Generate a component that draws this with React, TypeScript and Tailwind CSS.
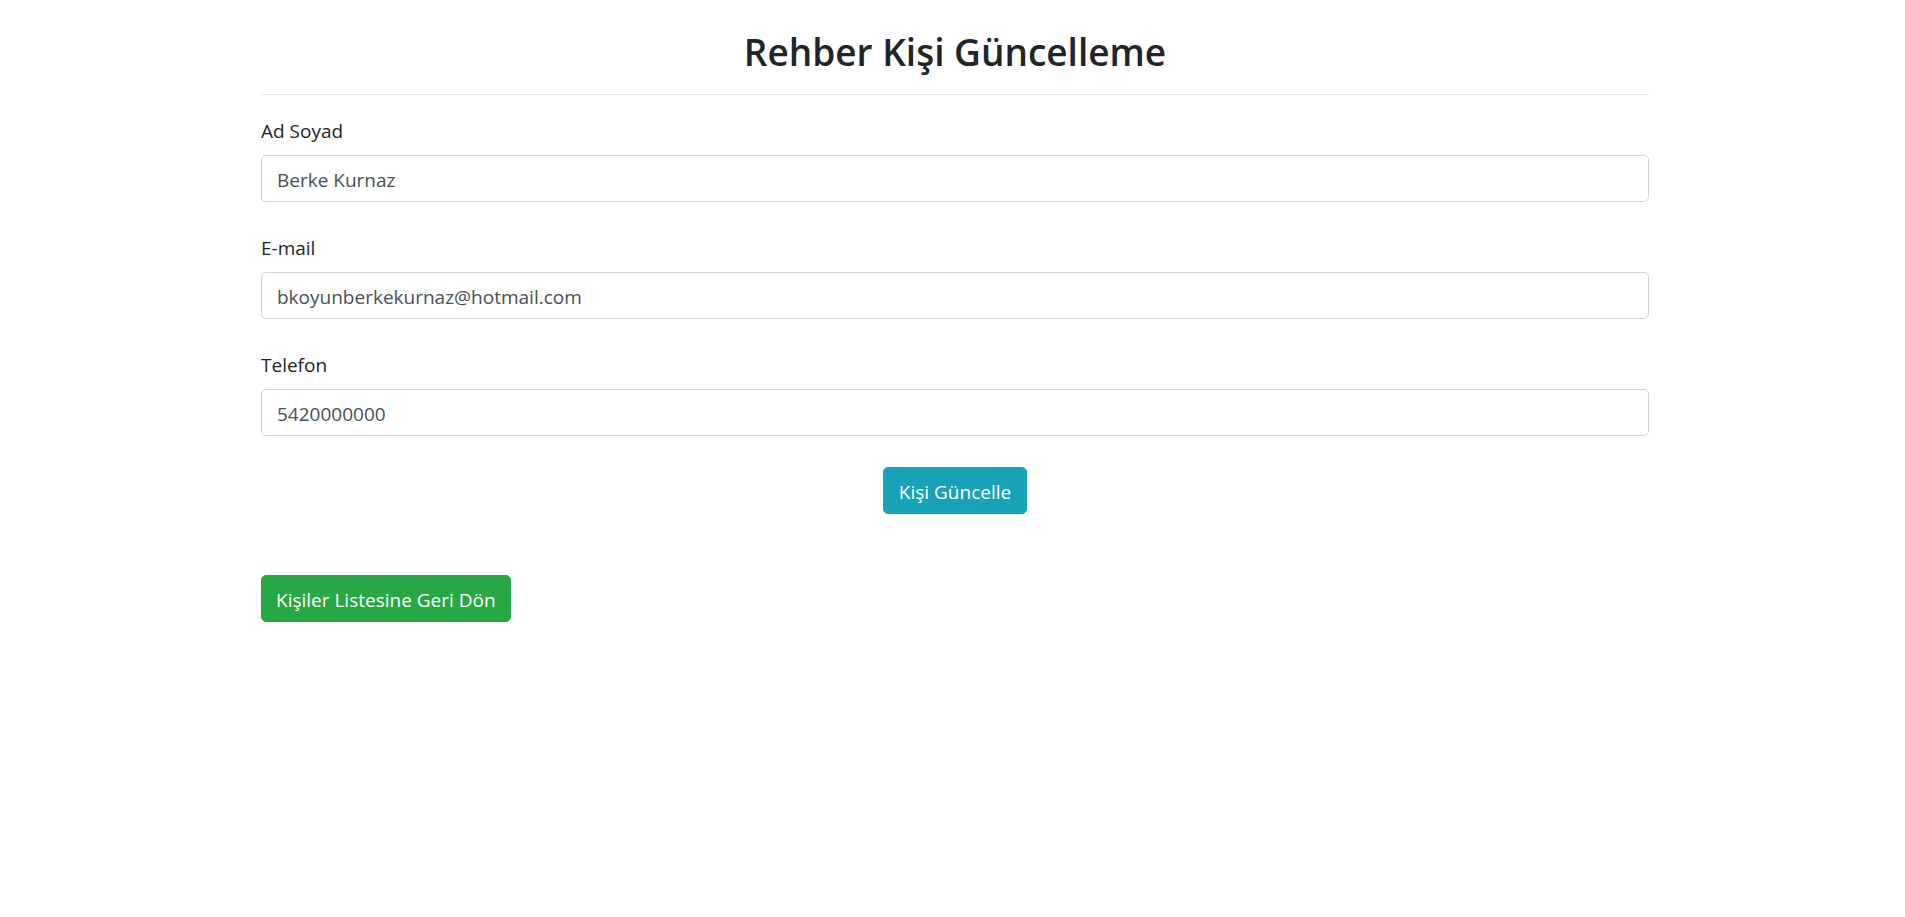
import React from "react";

export default function App() {
  return (
    <div
      className="min-h-screen bg-white pl-[5px] text-[#212529]"
      style={{ fontFamily: '"Open Sans", "Noto Sans", Arial, sans-serif' }}
    >
      <div className="mx-auto w-[1388px]">
        <h2 className="mt-[28px] mb-[18px] text-center text-[37px] font-semibold leading-[48px] text-[#212529]">
          Rehber Kişi Güncelleme
        </h2>
        <hr className="border-0 border-t border-[#e5e5e5]" />
        <form className="mt-[20px]" onSubmit={(e) => e.preventDefault()}>
          <div className="mb-[30px]">
            <label className="mb-[10px] block pt-[3px] text-[19px] leading-[27px] text-[#212529]">Ad Soyad</label>
            <input
              className="block h-[47px] w-full rounded-[5px] border border-[#ced4da] px-[15px] pt-[3px] text-[19px] text-[#495057] outline-none"
              defaultValue="Berke Kurnaz"
            />
          </div>
          <div className="mb-[30px]">
            <label className="mb-[10px] block pt-[3px] text-[19px] leading-[27px] text-[#212529]">E-mail</label>
            <input
              className="block h-[47px] w-full rounded-[5px] border border-[#ced4da] px-[15px] pt-[3px] text-[19px] text-[#495057] outline-none"
              defaultValue="bkoyunberkekurnaz@hotmail.com"
            />
          </div>
          <div className="mb-[31px]">
            <label className="mb-[10px] block pt-[3px] text-[19px] leading-[27px] text-[#212529]">Telefon</label>
            <input
              className="block h-[47px] w-full rounded-[5px] border border-[#ced4da] px-[15px] pt-[3px] text-[19px] text-[#495057] outline-none"
              defaultValue="5420000000"
            />
          </div>
          <div className="flex justify-center">
            <button
              type="submit"
              className="h-[47px] rounded-[5px] border border-[#17a2b8] bg-[#17a2b8] px-[15px] pt-[2px] text-[19px] leading-[28px] text-white"
            >
              Kişi Güncelle
            </button>
          </div>
        </form>
        <div className="mt-[61px]">
          <button className="h-[47px] rounded-[5px] border border-[#28a745] bg-[#28a745] px-[14px] pt-[2px] text-[19px] leading-[28px] text-white">
            Kişiler Listesine Geri Dön
          </button>
        </div>
      </div>
    </div>
  );
}
